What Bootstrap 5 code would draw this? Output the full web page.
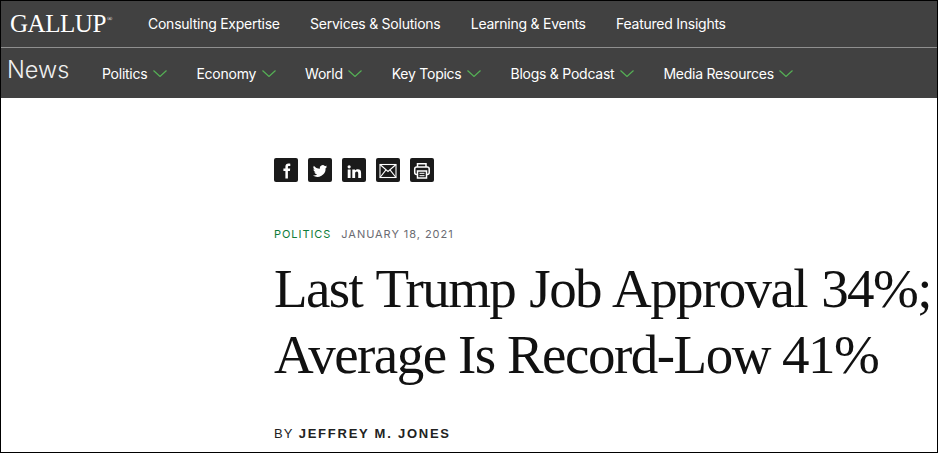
<!DOCTYPE html>
<html lang="en">
<head>
<meta charset="utf-8">
<title>Gallup News</title>
<link href="https://cdn.jsdelivr.net/npm/bootstrap@5.3.0/dist/css/bootstrap.min.css" rel="stylesheet">
<style>
html,body{height:100%;overflow:hidden;background:#fff}
.frame{width:938px;height:453px;border:1px solid #000;overflow:hidden;background:#fff;font-family:Inter,"Liberation Sans",sans-serif}
.site-head{background:#414141;color:#fff}
.top-row{box-sizing:content-box;height:44px;padding:0 0 2px 9px;border-bottom:1px solid #8f8f8f}
.logo{font-family:"Liberation Serif",serif;font-size:25px;line-height:1;letter-spacing:-.45px;color:#fff;width:138px}
.logo sup{font-size:7px;top:-1.5em;left:1px;position:relative;vertical-align:baseline}
.top-links{gap:30.3px}
.top-links a{font-size:14px;color:#fff;text-decoration:none;letter-spacing:-.25px}
.sub-row{height:50px;padding-left:6px}
.news{font-size:23.5px;font-weight:300;color:#f0f0f0;width:95px;line-height:1;position:relative;top:-3px}
.sub-links{gap:29.5px}
.sub-links a{font-size:14px;color:#fff;text-decoration:none;display:flex;align-items:center;gap:5.5px;letter-spacing:-.25px}
.chev{width:14px;height:7px;fill:none;stroke:#55b055;stroke-width:1.2}
.article{padding:60px 0 0 273px}
.share{gap:10px;margin-bottom:44px}
.sq{width:24px;height:24px;background:#1a1a1a;border-radius:2px;display:flex;align-items:center;justify-content:center}
.sq svg{display:block}
.meta{font-size:11px;letter-spacing:.95px;line-height:16px;gap:10px;text-transform:uppercase}
.meta .topic{color:#0e7c3a}
.meta .when{color:#6b6b72}
.headline{font-family:"Liberation Serif",serif;font-weight:400;font-size:55px;line-height:66px;color:#111;margin:14px 0 0 0;white-space:nowrap}
.line-one{letter-spacing:-1.6px;word-spacing:2px}
.line-two{letter-spacing:-1.5px}
.byline{font-size:13px;letter-spacing:1px;color:#222;margin-top:38px;line-height:16px;font-family:"Liberation Sans",Arial,sans-serif}
.byline b{letter-spacing:1.75px;font-weight:700;margin-left:1px}
</style>
</head>
<body>
<div class="frame">
<header class="site-head">
  <div class="top-row d-flex align-items-center">
    <a class="logo text-decoration-none" href="#">GALLUP<sup>®</sup></a>
    <nav class="top-links d-flex">
      <a href="#">Consulting Expertise</a>
      <a href="#">Services &amp; Solutions</a>
      <a href="#">Learning &amp; Events</a>
      <a href="#">Featured Insights</a>
    </nav>
  </div>
  <div class="sub-row d-flex align-items-center">
    <div class="news">News</div>
    <nav class="sub-links d-flex">
      <a href="#">Politics <svg class="chev" viewBox="0 0 14 7"><path d="M.5.5l6.500 6 6.500-6"/></svg></a>
      <a href="#">Economy <svg class="chev" viewBox="0 0 14 7"><path d="M.5.5l6.500 6 6.500-6"/></svg></a>
      <a href="#">World <svg class="chev" viewBox="0 0 14 7"><path d="M.5.5l6.500 6 6.500-6"/></svg></a>
      <a href="#">Key Topics <svg class="chev" viewBox="0 0 14 7"><path d="M.5.5l6.500 6 6.500-6"/></svg></a>
      <a href="#">Blogs &amp; Podcast <svg class="chev" viewBox="0 0 14 7"><path d="M.5.5l6.500 6 6.500-6"/></svg></a>
      <a href="#">Media Resources <svg class="chev" viewBox="0 0 14 7"><path d="M.5.5l6.500 6 6.500-6"/></svg></a>
    </nav>
  </div>
</header>
<main class="article">
  <div class="share d-flex">
    <a class="sq" href="#" aria-label="Facebook"><svg width="24" height="24" viewBox="0 0 24 24"><path fill="#fff" d="M13.900 20.500v-7.500h2l.3-2.400h-2.300V9c0-.7.2-1.100 1.100-1.100h1.300V5.700c-.3 0-1-.1-1.800-.1-1.900 0-3.100 1.100-3.100 3.100v1.900H9.400V13h2v7.500z"/></svg></a>
    <a class="sq" href="#" aria-label="Twitter"><svg width="24" height="24" viewBox="-1.500 -2.500 27 27"><path fill="#fff" d="M20 7.100c-.6.3-1.200.4-1.900.5.700-.4 1.200-1 1.400-1.800-.6.400-1.300.6-2.100.8a3.300 3.300 0 0 0-5.600 3C9.100 9.500 6.700 8.200 5.100 6.200a3.300 3.300 0 0 0 1 4.400c-.5 0-1-.2-1.500-.4 0 1.600 1.100 2.900 2.600 3.200-.5.100-1 .2-1.500.1.400 1.300 1.600 2.200 3.100 2.300A6.600 6.600 0 0 1 4 17.200 9.300 9.300 0 0 0 18.300 9c.7-.5 1.300-1.100 1.700-1.900z"/></svg></a>
    <a class="sq" href="#" aria-label="LinkedIn"><svg width="24" height="24" viewBox="1 0 21 21"><path fill="#fff" d="M6 10h2.500v7.500H6zM7.250 6.300a1.400 1.400 0 1 1 0 2.800 1.400 1.400 0 0 1 0-2.800zM10 10h2.400v1c.4-.7 1.200-1.200 2.400-1.200 2.300 0 2.900 1.400 2.900 3.500v4.200h-2.500v-3.700c0-1-.2-1.900-1.200-1.900s-1.500.7-1.500 1.900v3.700H10z"/></svg></a>
    <a class="sq" href="#" aria-label="Email"><svg width="24" height="24" viewBox="0 0 24 24" fill="none" stroke="#fff" stroke-width="1.100"><rect x="4" y="6.500" width="16" height="13"/><path d="M4 6.500l8 7 8-7M4 19.500l6-7.700M20 19.500l-6-7.700"/></svg></a>
    <a class="sq" href="#" aria-label="Print"><svg width="24" height="24" viewBox="0 0 24 24" fill="none" stroke="#fff" stroke-width="1.500"><path d="M7.500 9V5.800h8.500V9"/><rect x="4.700" y="9" width="14.500" height="7.500" rx="2"/><rect x="7.500" y="13" width="9" height="7" fill="#1a1a1a"/><path d="M9.500 15.300h5M9.500 17.700h5" stroke-width="1"/></svg></a>
  </div>
  <div class="meta d-flex">
    <span class="topic">Politics</span>
    <span class="when">January 18, 2021</span>
  </div>
  <h1 class="headline"><span class="line-one">Last Trump Job Approval 34%;</span><br><span class="line-two">Average Is Record-Low 41%</span></h1>
  <div class="byline">BY <b>JEFFREY M. JONES</b></div>
</main>
</div>
</body>
</html>
